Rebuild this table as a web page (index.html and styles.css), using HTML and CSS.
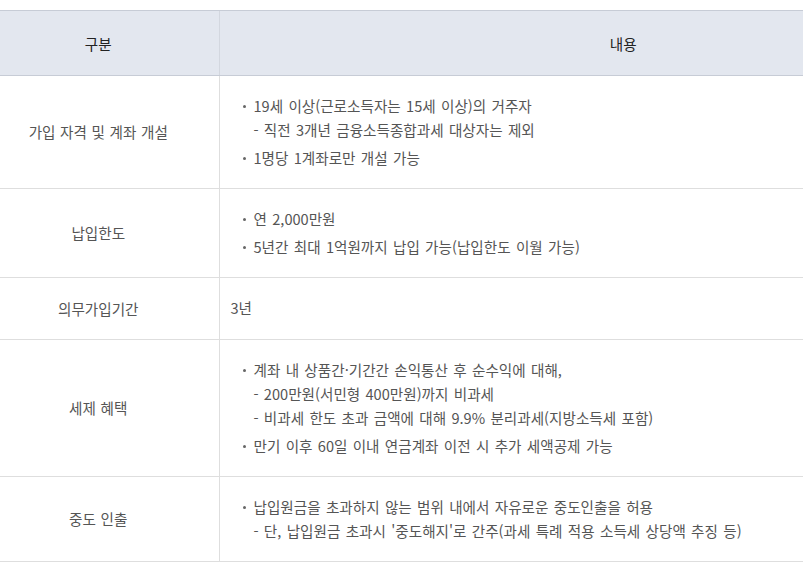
FILE: index.html
```
<!DOCTYPE html>
<html lang="ko">
<head>
<meta charset="utf-8">
<link rel="stylesheet" href="styles.css">
</head>
<body>
<div class="wrap">
<table class="tbl">
  <colgroup><col class="c1"><col class="c2"></colgroup>
  <thead>
    <tr><th class="h1">구분</th><th class="h2">내용</th></tr>
  </thead>
  <tbody>
    <tr>
      <td class="label">가입 자격 및 계좌 개설</td>
      <td class="content">
        <ul>
          <li>19세 이상(근로소득자는 15세 이상)의 거주자<br><span class="sub">- 직전 3개년 금융소득종합과세 대상자는 제외</span></li>
          <li>1명당 1계좌로만 개설 가능</li>
        </ul>
      </td>
    </tr>
    <tr>
      <td class="label">납입한도</td>
      <td class="content">
        <ul>
          <li>연 2,000만원</li>
          <li>5년간 최대 1억원까지 납입 가능(납입한도 이월 가능)</li>
        </ul>
      </td>
    </tr>
    <tr>
      <td class="label">의무가입기간</td>
      <td class="content plain">3년</td>
    </tr>
    <tr>
      <td class="label">세제 혜택</td>
      <td class="content">
        <ul>
          <li>계좌 내 상품간·기간간 손익통산 후 순수익에 대해,<br><span class="sub">- 200만원(서민형 400만원)까지 비과세</span><br><span class="sub">- 비과세 한도 초과 금액에 대해 9.9% 분리과세(지방소득세 포함)</span></li>
          <li>만기 이후 60일 이내 연금계좌 이전 시 추가 세액공제 가능</li>
        </ul>
      </td>
    </tr>
    <tr>
      <td class="label">중도 인출</td>
      <td class="content">
        <ul>
          <li>납입원금을 초과하지 않는 범위 내에서 자유로운 중도인출을 허용<br><span class="sub">- 단, 납입원금 초과시 '중도해지'로 간주(과세 특례 적용 소득세 상당액 추징 등)</span></li>
        </ul>
      </td>
    </tr>
  </tbody>
</table>
</div>
</body>
</html>
```

FILE: styles.css
```
html, body {
  margin: 0;
  padding: 0;
  background: #fff;
}
body {
  font-family: "Noto Sans CJK KR", "Noto Sans", sans-serif;
  font-size: 14.6px;
  color: #555;
}
.wrap {
  padding-top: 10px;
  width: 803px;
}
.tbl {
  width: 803px;
  border-collapse: collapse;
  table-layout: fixed;
}
.c1 { width: 219px; }
.tbl th {
  background: #e3e7ef;
  color: #222;
  font-weight: 400;
  height: 64px;
  padding: 0;
  border-top: 1px solid #c7ccd6;
  border-bottom: 1px solid #c7ccd6;
  border-left: 1px solid #d3d7df;
  text-align: center;
  vertical-align: middle;
}
.tbl th.h1 { border-left: none; padding-right: 22px; }
.tbl th.h2 { padding-left: 224px; }
.tbl td {
  border-bottom: 1px solid #dedede;
  border-left: 1px solid #dedede;
  vertical-align: middle;
  line-height: 24px;
}
.tbl td:first-child { border-left: none; }
.label {
  text-align: center;
  padding: 18px 22px 18px 0;
  word-spacing: 0.5px;
}
.content {
  padding: 18px 0 18px 11px;
  white-space: nowrap;
  word-spacing: 1.2px;
}
.content.plain { padding-top: 18px; padding-bottom: 19px; }
.content ul {
  list-style: none;
  margin: 0;
  padding: 0;
}
.content li {
  position: relative;
  padding-left: 23px;
}
.content li + li { margin-top: 4px; }
.content li::before {
  content: "";
  position: absolute;
  left: 12px;
  top: 11px;
  width: 3px;
  height: 3px;
  border-radius: 50%;
  background: #666;
}
```
